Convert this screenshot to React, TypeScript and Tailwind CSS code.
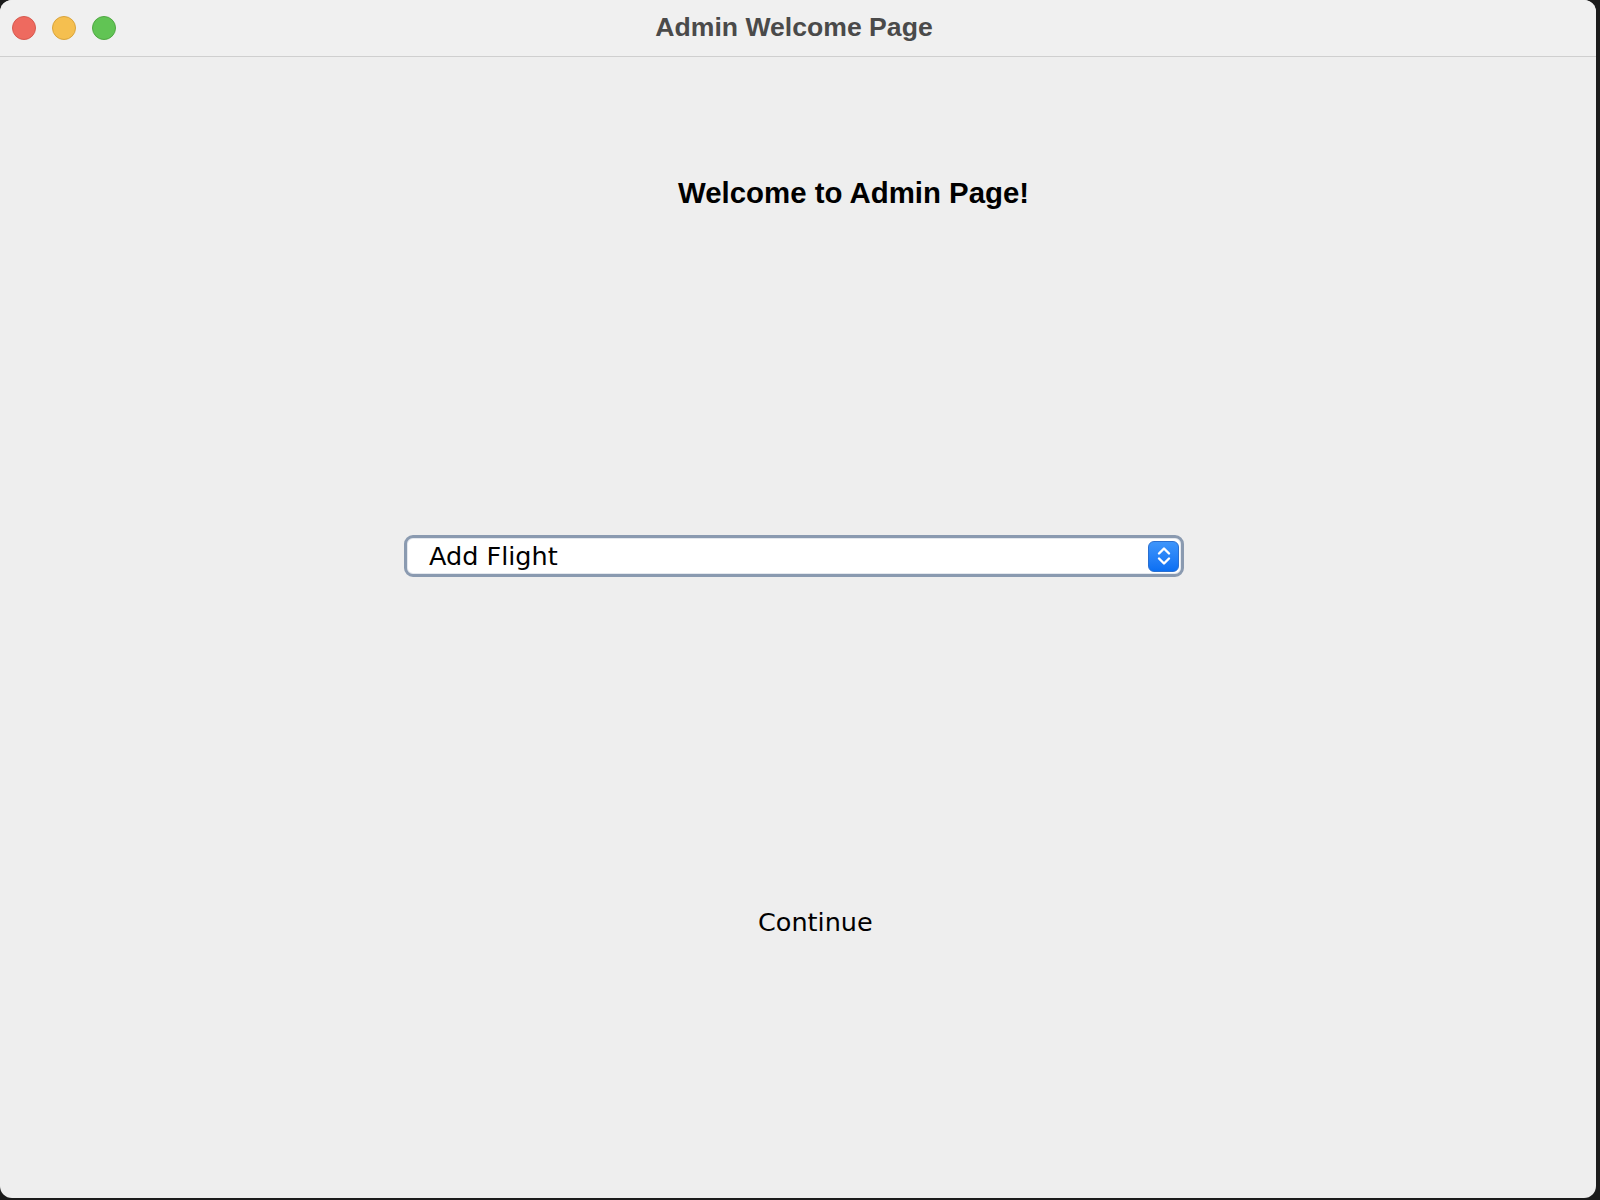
import React from "react";

const TrafficLights: React.FC = () => (
  <div className="flex items-center gap-[16px] pl-[12px]">
    <span className="w-[24px] h-[24px] rounded-full bg-[#ee6a5f] border border-[#d65a4f]" />
    <span className="w-[24px] h-[24px] rounded-full bg-[#f5bf4f] border border-[#d9a43c]" />
    <span className="w-[24px] h-[24px] rounded-full bg-[#61c454] border border-[#50a843]" />
  </div>
);

const StepperIcon: React.FC = () => (
  <svg width="18" height="22" viewBox="0 0 18 22" fill="none">
    <path d="M4 8.5 L9 3.5 L14 8.5" stroke="white" strokeWidth="2.4" strokeLinecap="round" strokeLinejoin="round" />
    <path d="M4 13.5 L9 18.5 L14 13.5" stroke="white" strokeWidth="2.4" strokeLinecap="round" strokeLinejoin="round" />
  </svg>
);

export default function App() {
  return (
    <div className="w-[1600px] h-[1200px] bg-[#1b1b1b] overflow-hidden">
      <div className="w-[1596px] h-[1198px] rounded-[12px] overflow-hidden bg-[#eeeeee] flex flex-col">
        {/* Title bar */}
        <div className="relative h-[57px] shrink-0 bg-[#f0f0f0] border-b border-[#cfcfcf] flex items-center">
          <TrafficLights />
          <div className="absolute inset-0 flex items-center justify-center pr-[8px] pointer-events-none">
            <span className="text-[26.6px] font-bold text-[#4a4a4a] font-['Liberation_Sans',Arial,sans-serif]">
              Admin Welcome Page
            </span>
          </div>
        </div>

        {/* Content */}
        <div className="flex-1 flex flex-col items-start">
          <h1 className="mt-[118px] ml-[678px] text-[29.4px] leading-[36px] font-bold text-black font-['Liberation_Sans',Arial,sans-serif]">
            Welcome to Admin Page!
          </h1>

          <div className="mt-[324px] ml-[404px] w-[780px] h-[42px] rounded-[9px] border-[3px] border-[#8a9ab0] bg-white shadow-[inset_0_0_0_1px_#e4e8ee] flex items-center justify-between pl-[22px] pr-[2px]">
            <span className="text-[25.5px] leading-[30px] text-black font-['DejaVu_Sans',sans-serif]">Add Flight</span>
            <div className="w-[31px] h-[31px] rounded-[6px] bg-gradient-to-b from-[#3d95fb] to-[#0a6ff3] border border-[#2a6fd0] flex items-center justify-center">
              <StepperIcon />
            </div>
          </div>

          <button className="mt-[330px] ml-[758px] text-[25.5px] leading-[30px] text-black font-['DejaVu_Sans',sans-serif]">
            Continue
          </button>
        </div>
      </div>
    </div>
  );
}
